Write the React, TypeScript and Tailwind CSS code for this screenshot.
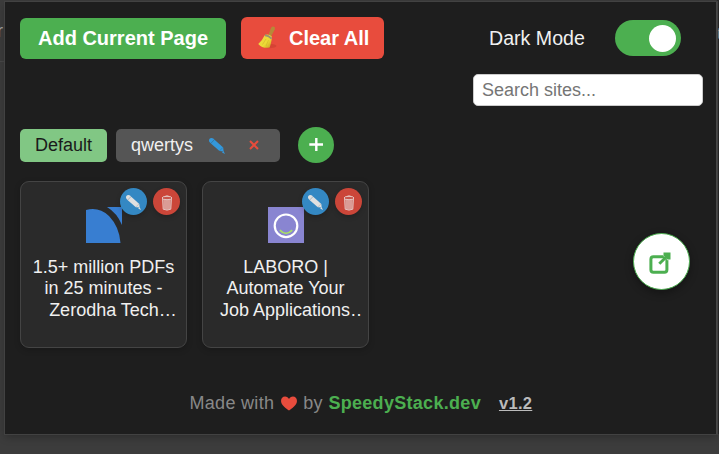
import type { ReactNode } from "react";

function Pencil({ className }: { className: string }) {
  return (
    <svg viewBox="0 0 16 16" className={className} fill="currentColor">
      <path d="M0 2.6Q-.1 1 1.3.3Q3-.4 4.3.6L5.3 1.5L1.6 5.3L.7 4.3Q0 3.6 0 2.6Z" />
      <path d="M5.3 1.5L14.2 9.6L14.6 13.4L10.5 13.1L1.6 5.3Z" />
      <path d="M14.4 12.8L16 15.9L13 14.4Z" />
      <path d="M10.6 13Q10.8 11.6 12.2 11.5Q12.4 10 13.9 9.8M5.5 1.7L1.8 5.5" fill="none" stroke="#00000030" strokeWidth=".6" />
    </svg>
  );
}

function Trash() {
  return (
    <svg viewBox="0 0 12 16" className="h-4 w-3" fill="none" stroke="#e5c4c0">
      <path d="M1.6 3.7L2.2 14.2Q6 16 9.8 14.2L10.4 3.7Z" fill="#d17c74" strokeWidth="1" />
      <path d="M4 5V14M6 5V14.5M8 5V14" strokeWidth=".9" />
      <ellipse cx="6" cy="3" rx="5" ry="1.7" fill="#c9564c" strokeWidth="1" />
      <path d="M4 1.4Q6 .2 8 1.4" strokeWidth=".9" />
    </svg>
  );
}

function Broom() {
  return (
    <svg viewBox="0 0 20 24" className="h-6 w-5">
      <defs>
        <linearGradient id="straw" x1="0" x2="1" y1="0" y2="1">
          <stop stopColor="#f0d04c" />
          <stop offset=".6" stopColor="#ecdc35" />
          <stop offset="1" stopColor="#c89b25" />
        </linearGradient>
      </defs>
      <ellipse cx="12" cy="20" rx="7.5" ry="2.2" fill="#a92d22" opacity=".3" />
      <path d="M11.3 9.5L14 2Q15.5-.4 17.8 1.2L17.8 3.3L14 10.8Z" fill="#b68a38" />
      <path d="M7.5 9.5Q11 7 14.8 10.4L14.6 14Q14 18 12.6 21.4Q6 23 1.2 17.9Q5.2 15 7.5 9.5Z" fill="url(#straw)" />
      <path d="M8 9.2Q11.4 9.4 14.6 12.6" fill="none" stroke="#9b9274" strokeWidth="2" />
      <path d="M9 13L5.5 18.5M11.5 14L9 20" stroke="#d0b52c" strokeWidth=".6" />
    </svg>
  );
}

function SiteCard({ favicon, children }: { favicon: ReactNode; children: ReactNode }) {
  return (
    <article className="relative flex h-[167px] w-[167px] flex-col items-center rounded-[9px] border border-[#444] bg-[#2a2a2a] pt-[25px] shadow-[0_2px_6px_#0003]">
      {favicon}
      <div className="absolute top-[6px] right-[6px] flex gap-[6px]">
        <button className="flex size-[27px] items-center justify-center rounded-full bg-[#3488c3] shadow-[0_2px_5px_#0003]">
          <Pencil className="mt-[2px] h-[15px] w-[15px] text-[#e0e0e0]" />
        </button>
        <button className="flex size-[27px] items-center justify-center rounded-full bg-[#cb4639] pt-[2px] shadow-[0_2px_5px_#0003]">
          <Trash />
        </button>
      </div>
      <div className="mt-[14px] w-[153px] overflow-hidden text-center text-[18px] leading-[21px] whitespace-nowrap text-[#f0f0f0]">
        {children}
      </div>
    </article>
  );
}

export default function App() {
  return (
    <div className="relative h-[454px] w-[719px] overflow-hidden bg-[#3c3c3c] pt-[2px] pl-[5px] font-['Liberation_Sans',Arial,sans-serif]">
      <span className="absolute top-[18px] left-[-3px] text-[18px] text-[#aaa]">r</span>
      <div className="absolute top-[61px] left-0 h-px w-[4px] bg-[#484848]" />
      <div className="absolute top-0 right-0 h-[434px] w-[2px] bg-[#292929]" />
      <div className="absolute top-[22px] right-0 w-[2px] overflow-hidden text-[16px] text-[#999]">t</div>
      <main className="relative flex h-[432px] w-[712px] flex-col border-r border-[#484848] bg-[#1e1e1e] px-[15px] shadow-[0_0_0_1px_#424242,0_3px_8px_#0004]">
        <header className="flex h-[57px] items-end">
          <button className="h-[41px] w-[206px] rounded-[6px] bg-[#4caf50] pb-[2px] text-[20px] font-bold text-white">Add Current Page</button>
          <button className="ml-[15px] flex h-[42px] w-[143px] items-center rounded-[6px] bg-[#e84c3d] pl-[16px] text-[20px] font-bold text-white">
            <Broom /><span className="ml-[12px]">Clear All</span>
          </button>
          <div className="ml-[105px] flex h-[42px] items-center gap-[28px] text-[#f0f0f0]">
            <span className="w-[98px] pt-[2px] text-[19.6px] whitespace-nowrap">Dark Mode</span>
            <button className="flex h-[36px] w-[66px] items-center justify-end rounded-full bg-[#4caf50] pr-[5px]">
              <span className="size-[27px] rounded-full bg-white" />
            </button>
          </div>
        </header>
        <input placeholder="Search sites..." className="mt-[15px] mr-[-2px] h-[32px] w-[230px] shrink-0 self-end rounded-[5px] border border-[#ccc] bg-white px-[8px] text-[18px] text-[#222] placeholder:text-[#757575]" />
        <nav className="mt-[21px] flex h-[36px] shrink-0 items-center">
          <button className="h-[33px] w-[87px] rounded-[5px] bg-[#81c784] text-[18px] text-[#1a1a1a]">Default</button>
          <div className="ml-[9px] flex h-[33px] w-[164px] items-center rounded-[5px] bg-[#555] pl-[15px] text-[18px] text-[#f0f0f0]">
            <span>qwertys</span>
            <Pencil className="mt-[2px] ml-[16px] size-[16px] text-[#3498db]" />
            <svg viewBox="0 0 10 10" className="ml-[24px] size-[10px]" stroke="#e74c3c" strokeWidth="2"><path d="M1 1L9 9M9 1L1 9" /></svg>
          </div>
          <button className="ml-[18px] flex size-[36px] items-center justify-center rounded-full bg-[#4caf50]">
            <svg viewBox="0 0 14 14" className="size-[14px]" stroke="white" strokeWidth="2.4"><path d="M7.3 0V13M.3 6.5H14" /></svg>
          </button>
        </nav>
        <section className="mt-[18px] flex gap-[15px]">
          <SiteCard favicon={<svg viewBox="0 0 36 36" className="size-[36px] shrink-0" fill="#387ed1"><path d="M0 3Q13-.5 23 9Q33.5 20 34.5 36H0ZM21 0H36V18Q31 6 21 0Z" /></svg>}>
            <div>1.5+ million PDFs</div><div>in 25 minutes -</div><div className="pt-px pl-[19px]">Zerodha Tech…</div>
          </SiteCard>
          <SiteCard favicon={<svg viewBox="0 0 36 36" className="size-[36px] shrink-0 bg-[#8985d1]" fill="none"><circle cx="18" cy="18.8" r="11.3" stroke="white" strokeWidth="2.2" /><path d="M11.8 23.2Q18 29.6 24.2 23.2" stroke="#a8df67" strokeWidth="1.7" /></svg>}>
            <div>LABORO |</div><div>Automate Your</div><div className="pt-px pl-[11px] text-left">Job Applications…</div>
          </SiteCard>
        </section>
        <footer className="mt-[44px] flex h-[22px] items-center pl-[169.5px] text-[18px] leading-[22px] tracking-[0.3px] whitespace-nowrap text-[#888]">
          <span>Made with</span>
          <svg viewBox="0 0 18 16" className="mr-[5px] ml-[6px] h-[15px] w-[18px]" fill="#e84c3d"><path d="M9 15.5C6 13 .5 9.5.5 5.2C.5 2.3 2.3.6 4.8.6C6.8.6 8.2 1.7 9 3.1C9.8 1.7 11.2.6 13.2.6C15.7.6 17.5 2.3 17.5 5.2C17.5 9.5 12 13 9 15.5Z" /></svg>
          <span>by</span>
          <b className="ml-[5.5px] text-[#4caf50]">SpeedyStack.dev</b>
          <b className="ml-[18px] text-[16.5px] text-[#bbb] underline">v1.2</b>
        </footer>
        <button className="absolute top-[231px] left-[628px] flex size-[57px] items-center justify-center rounded-full border border-[#4caf50] bg-white shadow-[0_3px_8px_#0005]">
          <svg viewBox="0 0 22 22" className="mr-[4px] mt-[2px] size-[22px] shrink-0" fill="none" stroke="#4caf50" strokeWidth="3"><rect x="1.9" y="4.7" width="16" height="15.6" rx="2.5" /><path d="M16.5 6L18.5 4" stroke="white" strokeWidth="7" /><path d="M10.3 11.7L18 4.2" /><path d="M14.5.5H21.5V7.5H18.5L14.5 3.5Z" fill="#4caf50" stroke="none" /></svg>
        </button>
      </main>
    </div>
  );
}
